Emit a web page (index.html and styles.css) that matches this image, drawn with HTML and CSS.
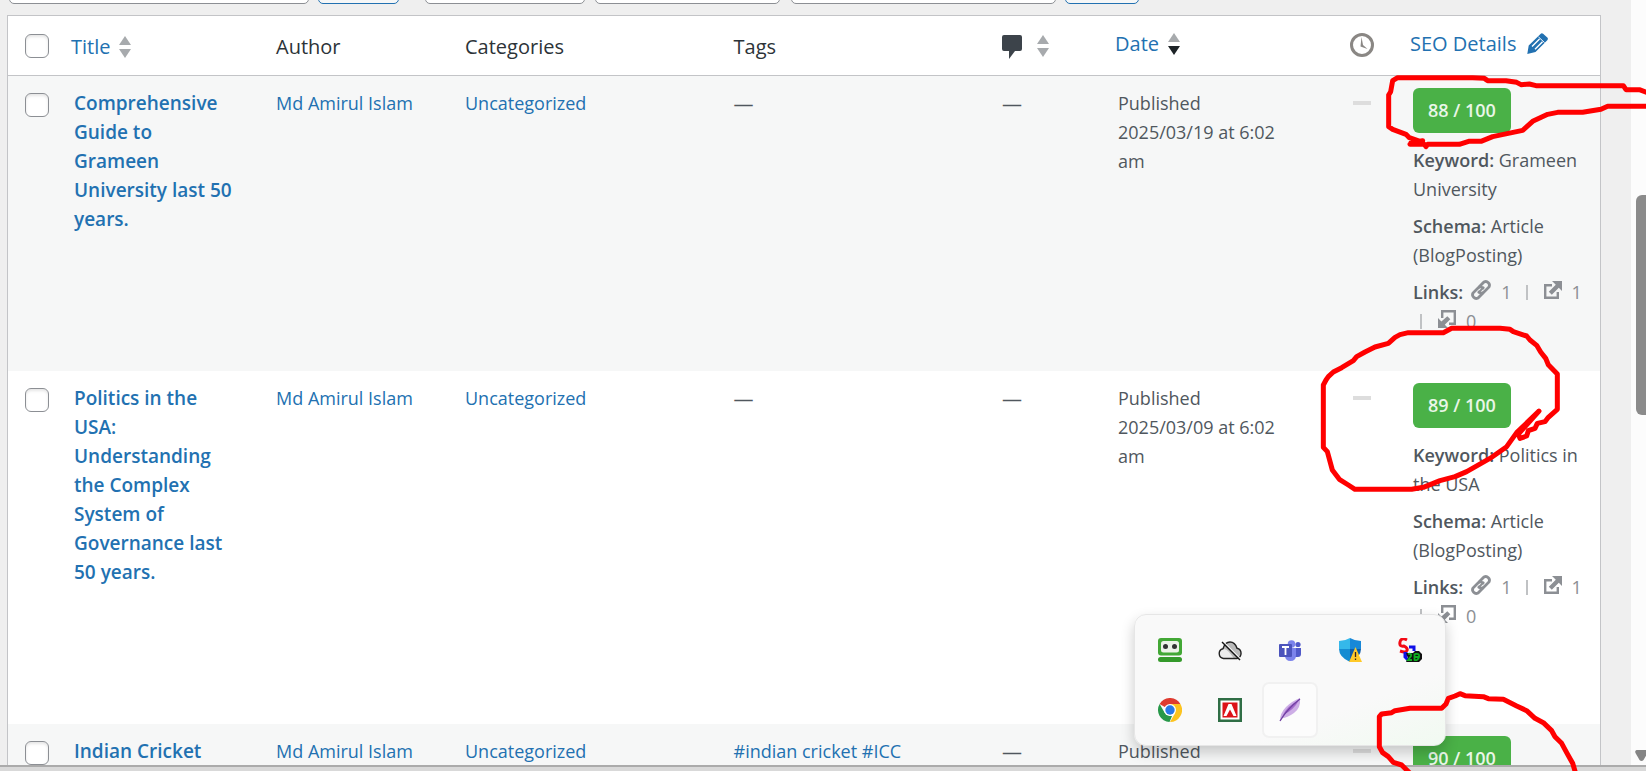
FILE: index.html
```html
<!DOCTYPE html>
<html lang="en">
<head>
<meta charset="utf-8">
<title>Posts</title>
<link rel="stylesheet" href="styles.css">
</head>
<body>
<svg class="sprite" aria-hidden="true">
  <symbol id="sort" viewBox="0 0 12 22"><path class="up" d="M6 0l6 9H0z"/><path class="down" d="M0 13h12l-6 9z"/></symbol>
  <symbol id="chain" viewBox="0 0 22 22"><g fill="none" stroke="currentColor" stroke-width="2.800" stroke-linecap="round"><path d="M9 8l5-5a3.700 3.700 0 0 1 5 5l-5 5a3.700 3.700 0 0 1-5 0"/><path d="M13 14l-5 5a3.700 3.700 0 0 1-5-5l5-5a3.700 3.700 0 0 1 5 0"/><path d="M8.500 13.500l5-5" stroke-width="2"/></g></symbol>
  <symbol id="external" viewBox="0 0 18 18"><path d="M8 4.200H1.200v12.600h12.600V11" fill="none" stroke="currentColor" stroke-width="2.400"/><path d="M8 0h10v10l-3.200-3.200-7 7-3-3 7-7z" fill="currentColor"/><path d="M5.500 8.500l3-3M9.500 13.500l3-3" stroke="#f6f7f7" stroke-width="1"/></symbol>
  <symbol id="internal" viewBox="0 0 18 18"><path d="M4.200 8V1.200h12.600v12.600H11" fill="none" stroke="currentColor" stroke-width="2.400"/><path d="M0 8v10h10l-3.200-3.200 5.500-5.500-3-3-5.900 5.100z" fill="currentColor"/></symbol>
</svg>

<div class="window">
  <main class="content">
    <div class="filters">
      <select class="bulk" aria-label="Bulk actions"></select>
      <button class="apply" type="button" aria-label="Apply"></button>
      <select class="dates" aria-label="Dates"></select>
      <select class="cats" aria-label="Categories"></select>
      <select class="seo-filter" aria-label="SEO filter"></select>
      <button class="filter" type="button" aria-label="Filter"></button>
    </div>

    <table class="posts">
      <colgroup>
        <col class="c-check"><col class="c-title"><col class="c-author"><col><col>
        <col class="c-comments"><col class="c-date"><col class="c-clock"><col class="c-seo">
      </colgroup>
      <thead>
        <tr>
          <th class="check"><input type="checkbox" aria-label="Select all"></th>
          <th class="title"><a class="sorter" href="#">Title <svg class="sort"><use href="#sort"/></svg></a></th>
          <th>Author</th>
          <th>Categories</th>
          <th>Tags</th>
          <th><a class="sorter comments" href="#" aria-label="Comments"><svg class="bubble" viewBox="0 0 20 24"><path d="M2 0h16q2 0 2 2v12q0 2-2 2h-5l-6 8v-8H2q-2 0-2-2V2q0-2 2-2z"/></svg><svg class="sort"><use href="#sort"/></svg></a></th>
          <th class="raised date-head"><a class="sorter desc" href="#">Date <svg class="sort"><use href="#sort"/></svg></a></th>
          <th class="clock"><svg class="clock-icon" viewBox="0 0 24 24"><circle cx="12" cy="12" r="10.500" fill="none" stroke="currentColor" stroke-width="3"/><path d="M11.500 4l1.500 8 4.500 4-7-2.500z" fill="currentColor"/></svg></th>
          <th class="raised seo-head"><a class="sorter" href="#">SEO Details <svg class="pencil" viewBox="0 0 21 21"><path fill="currentColor" d="M13.500 1q1.200-1.200 2.600-.2l4.200 3.800q1.200 1.200 0 2.600L8.500 19 .3 21l1.400-8.500z"/><path d="M11.500 4l6 5.500" stroke="#fff" stroke-width="1"/><path d="M5 13.500l7.500-7.500M8 16.200l7.500-7.500" stroke="#fff" stroke-width="1.400"/></svg></a></th>
        </tr>
      </thead>
      <tbody>
        <tr>
          <td class="check"><input type="checkbox" aria-label="Select Comprehensive Guide"></td>
          <td class="title"><a href="#">Comprehensive Guide to Grameen University last 50 years.</a></td>
          <td><a href="#">Md Amirul Islam</a></td>
          <td><a href="#">Uncategorized</a></td>
          <td><span class="none">—</span></td>
          <td><span class="none">—</span></td>
          <td class="date">Published<br>2025/03/19 at 6:02 am</td>
          <td class="clock"><span class="dash"></span></td>
          <td class="seo">
            <span class="score">88 / 100</span>
            <p><b>Keyword:</b> Grameen University</p>
            <p><b>Schema:</b> Article (BlogPosting)</p>
            <div class="links">
              <span class="group first"><b>Links:</b><svg class="chain"><use href="#chain"/></svg>1</span>
              <span class="group"><i></i><svg class="box"><use href="#external"/></svg>1</span>
              <span class="group"><i></i><svg class="box"><use href="#internal"/></svg>0</span>
            </div>
          </td>
        </tr>
        <tr>
          <td class="check"><input type="checkbox" aria-label="Select Politics in the USA"></td>
          <td class="title"><a href="#">Politics in the USA: Understanding the Complex System of Governance last 50 years.</a></td>
          <td><a href="#">Md Amirul Islam</a></td>
          <td><a href="#">Uncategorized</a></td>
          <td><span class="none">—</span></td>
          <td><span class="none">—</span></td>
          <td class="date">Published<br>2025/03/09 at 6:02 am</td>
          <td class="clock"><span class="dash"></span></td>
          <td class="seo">
            <span class="score">89 / 100</span>
            <p><b>Keyword:</b> Politics in the USA</p>
            <p><b>Schema:</b> Article (BlogPosting)</p>
            <div class="links">
              <span class="group first"><b>Links:</b><svg class="chain"><use href="#chain"/></svg>1</span>
              <span class="group"><i></i><svg class="box"><use href="#external"/></svg>1</span>
              <span class="group"><i></i><svg class="box"><use href="#internal"/></svg>0</span>
            </div>
          </td>
        </tr>
        <tr>
          <td class="check"><input type="checkbox" aria-label="Select Indian Cricket"></td>
          <td class="title"><a href="#">Indian Cricket</a></td>
          <td><a href="#">Md Amirul Islam</a></td>
          <td><a href="#">Uncategorized</a></td>
          <td><a href="#">#indian cricket</a> <a href="#">#ICC</a></td>
          <td><span class="none">—</span></td>
          <td class="date">Published</td>
          <td class="clock"><span class="dash"></span></td>
          <td class="seo"><span class="score">90 / 100</span></td>
        </tr>
      </tbody>
    </table>
  </main>
  <div class="scrollbar">
    <div class="thumb"></div>
    <svg class="arrow" viewBox="0 0 13 11"><path d="M1.500 0h10q2 1 1 3l-4 7q-2 2-4 0l-4-7q-1-2 1-3z"/></svg>
  </div>
</div>
<div class="edge"></div>

<div class="tray">
  <button type="button" aria-label="RoboForm"><svg viewBox="0 0 24 24"><rect width="24" height="17.500" rx="3" fill="#43a836"/><rect x="3" y="3" width="18" height="11.500" rx="2.500" fill="#edf3e8"/><circle cx="7.500" cy="8.600" r="2.500" fill="#333"/><circle cx="16.500" cy="8.600" r="2.500" fill="#333"/><rect y="19" width="24" height="5" rx="2.500" fill="#359a2b"/></svg></button>
  <button type="button" aria-label="Cloud offline"><svg viewBox="0 0 24 24"><path d="M5.500 20.500a5 5 0 0 1-.5-9.800Q7 4 12 4t7 6.200a5.300 5.300 0 0 1 0 10.300z" fill="#b9b9b9"/><path d="M2 12q5-3 9 2l5 6.500H6q-6-1-4-8.500z" fill="#ececec"/><path d="M5.500 20.500a5 5 0 0 1-.5-9.800Q7 4 12 4t7 6.200a5.300 5.300 0 0 1 0 10.300z" fill="none" stroke="#222" stroke-width="1.400"/><path d="M5 3.500l18 18" stroke="#f9f9f9" stroke-width="1.500"/><path d="M4 4l18 18" stroke="#111" stroke-width="1.400"/></svg></button>
  <button type="button" aria-label="Teams"><svg viewBox="0 0 24 24"><circle cx="20" cy="6.500" r="2.600" fill="#5059c9"/><path d="M16 10h7v6q0 3-3 3h-4z" fill="#5059c9"/><circle cx="13.500" cy="6" r="3.800" fill="#7b83eb"/><path d="M7 10h11v7q0 6-5.500 6T7 17z" fill="#7b83eb"/><rect x="1" y="6" width="13" height="13" rx="1" fill="#4b53bc"/><path d="M4 9h7M7.500 9v8" stroke="#fff" stroke-width="1.800"/></svg></button>
  <button type="button" aria-label="Security"><svg viewBox="0 0 24 24"><path d="M12 0Q7 3 1 3v8h11z" fill="#35b8ea"/><path d="M12 0q5 3 11 3v8H12z" fill="#1888d8"/><path d="M1 11q0 8 11 13V11z" fill="#158cd2"/><path d="M23 11q0 8-11 13V11z" fill="#0c5baa"/><path d="M17.500 9L24 24H11z" fill="#ffc928"/><path d="M17.500 14v5M17.500 20.500V22" stroke="#322" stroke-width="1.300"/></svg></button>
  <button type="button" aria-label="Utility"><svg viewBox="0 0 24 24"><path d="M9 2Q3-1 2 4t4 4q4 2 3 4.500T2 13" fill="none" stroke="#f30a14" stroke-width="3"/><path d="M11 9h5v4M7 14v5l3 3M7 19l3-4" fill="none" stroke="#1010e8" stroke-width="3"/><path d="M8 15h7l2-2h4l3 3v5l-3 3H8l2-4z" fill="#111"/><path d="M10 16q4-1 3 2l-3 4h4M16.500 15.500v7M17 16q5-1 4 3t-5 3M16 19h5" fill="none" stroke="#0fae20" stroke-width="1.800"/></svg></button>
  <button type="button" aria-label="Chrome"><svg viewBox="0 0 24 24"><path d="M12 12L1.600 6A12 12 0 0 1 22.400 6z" fill="#df3b30"/><path d="M12 6h10.400A12 12 0 0 1 12 24l5.200-9z" fill="#fcc31f"/><path d="M1.600 6l5.200 9L12 18l2 0-2.500 6A12 12 0 0 1 1.600 6z" fill="#279849"/><circle cx="12" cy="12" r="6" fill="#fff"/><circle cx="12" cy="12" r="4.700" fill="#2979e8"/></svg></button>
  <button type="button" aria-label="Adobe"><svg viewBox="0 0 24 24"><rect width="24" height="24" fill="#2f6e45"/><rect x="2.500" y="2.500" width="19" height="19" fill="#fff"/><rect x="4.500" y="4.500" width="15" height="15" fill="#dc1219"/><path d="M5.500 18L10.500 6h3L18.500 18h-3L12 11.500 8.500 18z" fill="#fff"/></svg></button>
  <button class="active" type="button" aria-label="Quill"><svg viewBox="0 0 24 24"><path d="M2 23Q2 15 8 9T22 0q1 10-6 15T4 20z" fill="#cdaee6"/><path d="M5 17q4-9 16-15-5 10-16 15z" fill="#a36bcb"/><path d="M2 23Q9 11 22 1" fill="none" stroke="#7141a2" stroke-width="1.300"/></svg></button>
</div>

<svg class="ink" width="1646" height="771" viewBox="0 0 1646 771" aria-hidden="true">
  <g transform="translate(1246 0) scale(.33333)"><path d="M1210 280L1180 269H1140L1132 257H870L850 252 825 254 812 247 780 242H725L715 235 680 233H455L440 242 434 275 428 285V380L440 388 480 403 490 413 522 424 492 433H535L540 440 545 433H640L668 424H705L740 410 830 391 860 364 905 343 935 337H1010L1065 328 1085 319H1210M495 428L530 422"/></g>
  <g transform="translate(1300 360) scale(.33333)"><path d="M70 75L78 60 85 50 100 36 125 23 160 2 170-10 195-24 225-39 265-50 285-68 300-76 325-82H430L455-95H600L630-92 640-85 680-72 690-60 710-44 722-24 737-5 745 14 772 42V148L745 172 735 185 712 190 705 205 685 212 680 228 660 235 655 222 717 153 650 218 620 260 575 292 500 335 465 350 420 362 370 382 335 388H165L145 375 118 358 97 330 82 275 70 262Z"/></g>
  <g transform="translate(1350 600) scale(.33333)"><path d="M180 520L155 495 130 487 115 470 98 458 88 440V350L95 342 125 338 135 332 180 325H275L288 312 295 295 315 288 330 281 345 287 400 290 415 296 460 298 500 318 530 332 555 355 580 368 605 392 615 410 635 430 650 458 668 490 677 520"/></g>
</svg>
</body>
</html>
```
FILE: styles.css
```css
* { box-sizing: border-box; }

body {
  margin: 0;
  height: 100vh;
  overflow: hidden;
  display: flex;
  flex-direction: column;
  background: #efefef;
  color: #50575e;
  font-family: "Open Sans", "Noto Sans", sans-serif;
  font-size: 18px;
  line-height: 29px;
}

a { color: #2271b1; text-decoration: none; }
b { font-weight: 600; }
p { margin: 0 0 8px; }
svg { display: block; flex: none; }
.sprite { position: absolute; width: 0; height: 0; }

.window { flex: 1; min-height: 0; display: flex; }
.content { flex: 1; min-width: 0; padding: 0 30px 0 7px; overflow: hidden; }

/* Filter row */
.filters {
  height: 15px;
  padding: 0 0 11px 2px;
  display: flex;
  align-items: flex-end;
}
.filters select,
.filters button {
  flex: none;
  height: 45px;
  margin: 0;
  padding: 0;
  appearance: none;
  border: 1px solid #8c8f94;
  border-radius: 5px;
  background: #fff;
}
.filters button { border-color: #2271b1; background: #f6f7f7; }
.filters .bulk { width: 300px; }
.filters .apply { width: 81px; margin: 0 26px 0 9px; }
.filters .dates { width: 160px; margin-right: 10px; }
.filters .cats { width: 185px; margin-right: 11px; }
.filters .seo-filter { width: 265px; margin-right: 9px; }
.filters .filter { width: 74px; }

/* Posts table */
.posts {
  width: 100%;
  table-layout: fixed;
  border-collapse: separate;
  border-spacing: 0;
  border: 1px solid #c3c4c7;
  background: #fff;
}
.c-check { width: 54px; }
.c-title { width: 202px; }
.c-author { width: 189px; }
.c-comments { width: 116px; }
.c-date { width: 217px; }
.c-clock { width: 78px; }
.c-seo { width: 199px; }

th, td { padding: 13px 0 0 12px; text-align: left; vertical-align: top; }
th {
  height: 60px;
  padding-top: 16px;
  border-bottom: 1px solid #c3c4c7;
  color: #2c3338;
  font-size: 20px;
  font-weight: 400;
}
th.raised { padding: 13px 0 0 9px; }
th.title { padding-left: 9px; }
tbody tr:nth-child(odd) { background: #f6f7f7; }

.check input {
  display: block;
  appearance: none;
  width: 24px;
  height: 24px;
  margin: 4px 0 0 5px;
  border: 1px solid #8c8f94;
  border-radius: 6px;
  background: #fff;
  box-shadow: inset 0 2px 3px rgba(0, 0, 0, .1);
}
th.check input { margin-top: 2px; }

td.title {
  padding-right: 28px;
  padding-bottom: 137px;
  font-size: 19px;
  font-weight: 600;
}
td.date { padding-right: 24px; }
.none { font-size: 20px; }

.sorter { display: flex; align-items: center; gap: 9px; }
.sort { width: 12px; height: 22px; fill: #a7aaad; }
.desc .sort { --down: #1d2327; }
.down { fill: var(--down, #a7aaad); }
.comments { gap: 15px; }
.bubble { width: 20px; height: 24px; margin-top: 3px; fill: #3c434a; }
.pencil { width: 21px; height: 21px; margin-left: 2px; }

.clock { padding-left: 0; }
.clock-icon { width: 24px; height: 24px; margin: 1px auto 0; color: #8a8784; }
.dash { display: block; width: 18px; height: 4px; margin: 12px auto 0; background: #ddd; }

td.seo { padding-top: 12px; padding-right: 8px; }
.score {
  display: block;
  width: fit-content;
  margin-bottom: 13px;
  padding: 8px 15px;
  border-radius: 6px;
  background: #4ab147;
  color: #e9f6e8;
  font-weight: 600;
}
.links { display: flex; flex-wrap: wrap; column-gap: 7px; color: #8c8f94; }
.links b { color: #50575e; }
.group { display: flex; align-items: center; gap: 10px; height: 29px; padding-left: 7px; }
.group.first { gap: 7px; padding-left: 0; }
.group i { width: 2px; height: 15px; margin-right: 6px; background: #c0c2c4; }
.chain { width: 22px; height: 22px; margin: 0 2px 6px 0; }
.box { width: 18px; height: 18px; margin-bottom: 6px; }

/* Window frame */
.scrollbar {
  width: 15px;
  background: #fcfcfc;
  display: flex;
  flex-direction: column;
  justify-content: space-between;
  align-items: flex-end;
  overflow: hidden;
}
.thumb { width: 10px; height: 220px; margin-top: 195px; border-radius: 6px 0 0 6px; background: #8b8b8b; }
.arrow { width: 13px; height: 11px; margin: 0 -2px 4px 0; fill: #858585; }
.edge { flex: none; height: 6px; border-top: 2px solid #ababab; background: #d9d9d9; }

/* Overflow tray */
.tray {
  position: absolute;
  right: 200px;
  bottom: 25px;
  display: grid;
  grid-template-columns: repeat(5, 56px);
  gap: 4px;
  padding: 7px;
  border: 1px solid #e6e6e6;
  border-radius: 12px;
  background: linear-gradient(160deg, #f9f9f9 70%, #f1faf1);
  box-shadow: 0 6px 14px rgba(0, 0, 0, .2);
}
.tray button {
  display: grid;
  place-items: center;
  height: 56px;
  padding: 0;
  border: 2px solid transparent;
  border-radius: 7px;
  background: none;
}
.tray .active { border-color: #f1f1f1; background: #fcfcfc; }
.tray svg { width: 24px; height: 24px; }

/* Pen annotations */
.ink {
  position: absolute;
  top: 0;
  right: 0;
  fill: none;
  stroke: #f00;
  stroke-width: 15;
  stroke-linejoin: round;
  stroke-linecap: round;
  pointer-events: none;
}
```
